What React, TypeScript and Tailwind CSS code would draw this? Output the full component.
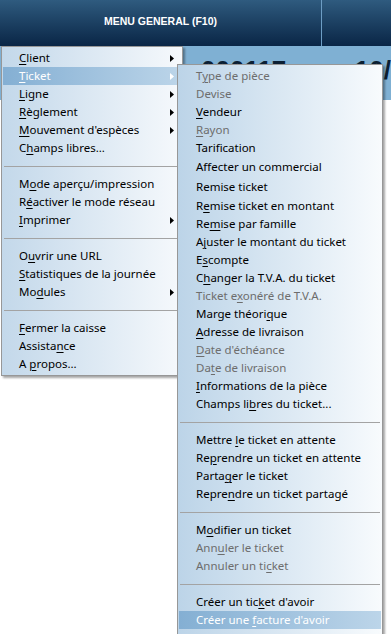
type Item =
  | 'sep'
  | { label: string; sub?: boolean; disabled?: boolean; active?: boolean; tall?: boolean }

const mainItems: Item[] = [
  { label: '&Client', sub: true },
  { label: '&Ticket', sub: true, active: true },
  { label: '&Ligne', sub: true },
  { label: '&Règlement', sub: true },
  { label: "&Mouvement d'espèces", sub: true },
  { label: 'C&hamps libres...' },
  'sep',
  { label: 'M&ode aperçu/impression' },
  { label: 'R&éactiver le mode réseau' },
  { label: '&Imprimer', sub: true },
  'sep',
  { label: 'O&uvrir une URL' },
  { label: '&Statistiques de la journée' },
  { label: 'Mo&dules', sub: true },
  'sep',
  { label: '&Fermer la caisse' },
  { label: 'Assista&nce' },
  { label: 'A &propos...' },
]

const ticketItems: Item[] = [
  { label: 'T&ype de pièce', disabled: true },
  { label: 'Devise', disabled: true },
  { label: '&Vendeur' },
  { label: '&Rayon', disabled: true },
  { label: 'Tarification' },
  { label: 'Affecter un commercial', tall: true },
  { label: 'Remise ticket', tall: true },
  { label: 'R&emise ticket en montant' },
  { label: 'Re&mise par famille' },
  { label: 'A&juster le montant du ticket' },
  { label: 'E&scompte' },
  { label: 'C&hanger la T.V.A. du ticket' },
  { label: 'Ticket e&xonéré de T.V.A.', disabled: true },
  { label: 'Marge théori&que' },
  { label: '&Adresse de livraison' },
  { label: "&Date d'échéance", disabled: true },
  { label: 'Da&te de livraison', disabled: true },
  { label: '&Informations de la pièce' },
  { label: 'Champs li&bres du ticket...' },
  'sep',
  { label: 'Mettre &le ticket en attente' },
  { label: 'Re&prendre un ticket en attente' },
  { label: 'Parta&ger le ticket' },
  { label: 'Repre&ndre un ticket partagé' },
  'sep',
  { label: 'M&odifier un ticket' },
  { label: 'Ann&uler le ticket', disabled: true },
  { label: 'Annuler un ti&cket', disabled: true },
  'sep',
  { label: "Créer un tic&ket d'avoir" },
  { label: "Créer une &facture d'avoir", active: true },
  { label: "Ticket d'avoir...", disabled: true },
]

// '&' marks the access key, like a Windows menu caption
function Caption({ text }: { text: string }) {
  const i = text.indexOf('&')
  if (i < 0) return <>{text}</>
  return (
    <>
      {text.slice(0, i)}
      <u className="underline-offset-[2px]">{text[i + 1]}</u>
      {text.slice(i + 2)}
    </>
  )
}

function Arrow({ white }: { white?: boolean }) {
  return (
    <svg width="4" height="7" viewBox="0 0 4 7" className="ml-auto mr-[7px] shrink-0">
      <path d="M0 0L4 3.5L0 7Z" fill={white ? '#ffffff' : '#000000'} />
    </svg>
  )
}

function MenuRow({ item, indent }: { item: Item; indent: string }) {
  if (item === 'sep') {
    return (
      <div className="flex h-[18px] items-center px-[1px]">
        <div className="h-px w-full bg-[#a3a3a3]" />
      </div>
    )
  }
  const tone = item.active
    ? 'bg-linear-to-r from-[#84afd3] to-[#bcd5e9] text-white'
    : item.disabled
      ? 'text-[#6d6d6d]'
      : 'text-black'
  return (
    <div className={`flex items-center ${item.tall ? 'h-[20px]' : 'h-[18px]'} ${tone}`}>
      <span className={`${indent} whitespace-nowrap leading-none`}>
        <Caption text={item.label} />
      </span>
      {item.sub && <Arrow white={item.active} />}
    </div>
  )
}

export default function App() {
  return (
    <div className="relative h-[634px] w-[391px] overflow-hidden bg-white font-['Noto_Sans',sans-serif] text-[11.5px]">
      <header className="flex h-[46px] bg-linear-to-b from-[#2f5b7f] to-[#0a2646]">
        <div className="flex w-[321px] items-center justify-center pb-[2px] font-['Liberation_Sans',Arial,sans-serif] text-[10.5px] font-bold text-white">
          MENU GENERAL (F10)
        </div>
        <div className="w-px bg-[#6d9dc4]" />
        <div className="flex-1" />
      </header>

      <div className="flex h-[54px] overflow-hidden bg-[#7fb0d3] pt-[11px] font-['Liberation_Sans',Arial,sans-serif] text-[26px] font-bold leading-[26px] text-[#0b1f33]">
        <span className="ml-[201px]">000117</span>
        <span className="ml-auto">10/</span>
      </div>

      {/* main menu */}
      <div className="absolute left-[1px] top-[46px] w-[182px] border border-[#979797] bg-linear-to-r from-[#c3d8ea] to-[#f6f9fc] px-[1px] py-[2px] shadow-[2px_2px_2px_rgba(0,0,0,0.35)]">
        {mainItems.map((it, i) => (
          <MenuRow key={i} item={it} indent="pl-[16px]" />
        ))}
      </div>

      {/* Ticket submenu */}
      <div className="absolute left-[177px] top-[64px] w-[206px] border border-[#979797] bg-linear-to-r from-[#bcd4e8] to-[#f8fbfd] px-[1px] py-[2px] shadow-[2px_2px_2px_rgba(0,0,0,0.35)]">
        {ticketItems.map((it, i) => (
          <MenuRow key={i} item={it} indent="pl-[17px]" />
        ))}
      </div>
    </div>
  )
}
